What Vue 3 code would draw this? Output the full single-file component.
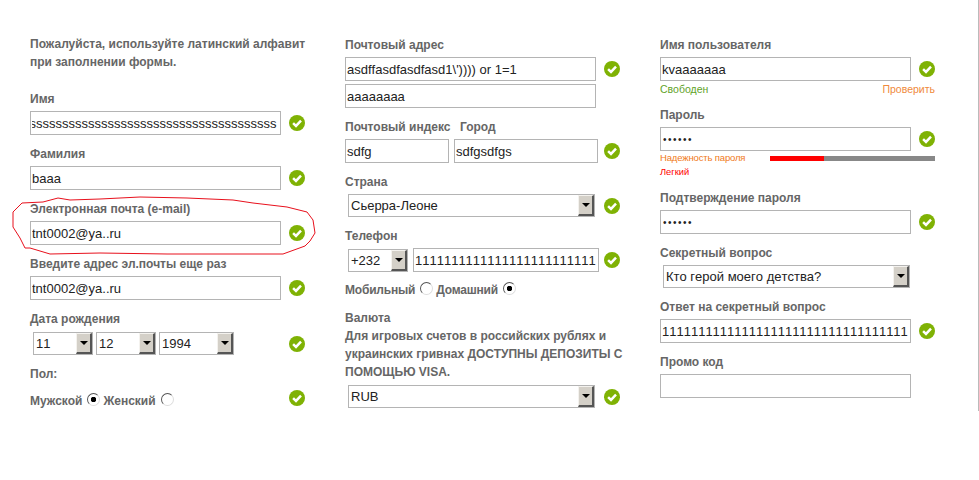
<script setup>
import { onMounted, ref } from 'vue'

const nameInput = ref(null)

onMounted(() => {
  if (nameInput.value) nameInput.value.scrollLeft = nameInput.value.scrollWidth
})
</script>

<template>
  <form class="page" @submit.prevent>
    <svg class="defs" width="0" height="0" aria-hidden="true">
      <symbol id="ok" viewBox="0 0 16 16">
        <circle cx="8" cy="8" r="8" fill="#7fb204" />
        <path d="M4.1 8.1 L7 10.9 L12 5.6" fill="none" stroke="#fff" stroke-width="2.5" />
      </symbol>
    </svg>

    <section class="col">
      <p class="intro">Пожалуйста, используйте латинский алфавит<br />при заполнении формы.</p>

      <div class="field">
        <label>Имя</label>
        <div class="row">
          <input ref="nameInput" class="in scrolled" readonly value="sssssssssssssssssssssssssssssssssssssssssssssssss" />
          <svg class="ok"><use href="#ok" /></svg>
        </div>
      </div>
      <div class="field">
        <label>Фамилия</label>
        <div class="row">
          <input class="in" readonly value="baaa" />
          <svg class="ok"><use href="#ok" /></svg>
        </div>
      </div>
      <div class="field">
        <label>Электронная почта (e-mail)</label>
        <div class="row">
          <input class="in" readonly value="tnt0002@ya..ru" />
          <svg class="ok"><use href="#ok" /></svg>
        </div>
      </div>
      <div class="field">
        <label>Введите адрес эл.почты еще раз</label>
        <div class="row">
          <input class="in" readonly value="tnt0002@ya..ru" />
          <svg class="ok"><use href="#ok" /></svg>
        </div>
      </div>
      <div class="field date">
        <label>Дата рождения</label>
        <div class="row">
          <div class="selects">
            <div class="sel w60"><span>11</span><i class="arrow"></i></div>
            <div class="sel w60"><span>12</span><i class="arrow"></i></div>
            <div class="sel w75"><span>1994</span><i class="arrow"></i></div>
          </div>
          <svg class="ok"><use href="#ok" /></svg>
        </div>
      </div>
      <div class="field gender">
        <label>Пол:</label>
        <div class="row">
          <div class="radios">
            <span class="opt">Мужской</span><i class="radio on"></i>
            <span class="opt">Женский</span><i class="radio"></i>
          </div>
          <svg class="ok up"><use href="#ok" /></svg>
        </div>
      </div>
    </section>

    <section class="col">
      <div class="field">
        <label>Почтовый адрес</label>
        <div class="row">
          <input class="in" readonly value="asdffasdfasdfasd1\')))) or 1=1" />
          <svg class="ok"><use href="#ok" /></svg>
        </div>
        <input class="in second" readonly value="aaaaaaaa" />
      </div>
      <div class="field">
        <div class="pair-labels">
          <label class="zip-label">Почтовый индекс</label>
          <label>Город</label>
        </div>
        <div class="row">
          <input class="in zip" readonly value="sdfg" />
          <input class="in city" readonly value="sdfgsdfgs" />
          <svg class="ok"><use href="#ok" /></svg>
        </div>
      </div>
      <div class="field">
        <label>Страна</label>
        <div class="row">
          <div class="sel wide"><span>Сьерра-Леоне</span><i class="arrow"></i></div>
          <svg class="ok"><use href="#ok" /></svg>
        </div>
      </div>
      <div class="field phone">
        <label>Телефон</label>
        <div class="row">
          <div class="sel code"><span>+232</span><i class="arrow"></i></div>
          <input class="in num" readonly value="1111111111111111111111111" />
          <svg class="ok"><use href="#ok" /></svg>
        </div>
        <div class="radios phone-type">
          <span class="opt">Мобильный</span><i class="radio"></i>
          <span class="opt">Домашний</span><i class="radio on"></i>
        </div>
      </div>
      <div class="field currency">
        <label>Валюта</label>
        <p class="note">Для игровых счетов в российских рублях и<br />украинских гривнах ДОСТУПНЫ ДЕПОЗИТЫ С<br />ПОМОЩЬЮ VISA.</p>
        <div class="row">
          <div class="sel wide"><span>RUB</span><i class="arrow"></i></div>
          <svg class="ok"><use href="#ok" /></svg>
        </div>
      </div>
    </section>

    <section class="col">
      <div class="field user">
        <label>Имя пользователя</label>
        <div class="row">
          <input class="in" readonly value="kvaaaaaaa" />
          <svg class="ok"><use href="#ok" /></svg>
        </div>
        <div class="hint">
          <span class="free">Свободен</span>
          <a class="check-link">Проверить</a>
        </div>
      </div>
      <div class="field pass">
        <label>Пароль</label>
        <div class="row">
          <input class="in dots" type="password" readonly value="123456" />
          <svg class="ok"><use href="#ok" /></svg>
        </div>
        <div class="strength">
          <span class="strength-label">Надежность пароля</span>
          <div class="bar"><div class="bar-fill"></div></div>
        </div>
        <div class="weak">Легкий</div>
      </div>
      <div class="field">
        <label>Подтверждение пароля</label>
        <div class="row">
          <input class="in dots" type="password" readonly value="123456" />
          <svg class="ok"><use href="#ok" /></svg>
        </div>
      </div>
      <div class="field">
        <label>Секретный вопрос</label>
        <div class="row">
          <div class="sel wide"><span>Кто герой моего детства?</span><i class="arrow"></i></div>
        </div>
      </div>
      <div class="field">
        <label>Ответ на секретный вопрос</label>
        <div class="row">
          <input class="in" readonly value="1111111111111111111111111111111111" />
          <svg class="ok"><use href="#ok" /></svg>
        </div>
      </div>
      <div class="field">
        <label>Промо код</label>
        <div class="row">
          <input class="in" readonly value="" />
        </div>
      </div>
    </section>

    <svg class="scribble" width="330" height="70" viewBox="0 190 330 70" aria-hidden="true">
      <path
        d="M25 248 L20 238 L13 227 L13 212 L22 203 L43 202 L58 198 L70 200 L100 199 L140 197 L187 198 L233 200 L253 203 L287 207 L307 212 L313 220 L315 233 L310 241 L305 246 L283 254 L233 254 L167 254 L100 253 L50 254 L30 248 L25 248"
        fill="none" stroke="#e8101c" stroke-width="1" />
    </svg>
  </form>
</template>

<style>
html, body { margin: 0; background: #fff; }
</style>

<style scoped>
.page {
  position: relative;
  box-sizing: border-box;
  width: 979px;
  height: 411px;
  border-right: 1px solid #bbb;
  display: flex;
  font: bold 12px/18px "Liberation Sans", Arial, sans-serif;
  color: #666;
}
.defs { position: absolute; }
.col {
  width: 315px;
  box-sizing: border-box;
  padding: 36px 0 0 30px;
}
p { margin: 0; }
.intro { margin: -1px 0 19px; }
label { display: block; height: 18px; }

.field { width: 275px; margin-bottom: 10px; }
.field > label, .pair-labels { margin-bottom: 3px; }
.row {
  display: flex;
  align-items: center;
}
.row > .ok { margin-left: auto; }

.in {
  box-sizing: border-box;
  width: 251px;
  height: 24px;
  padding: 0 1px;
  border: 1px solid #b4b4b4;
  outline: none;
  background: #fff;
  color: #222;
  font: 13px "Liberation Sans", Arial, sans-serif;
  font-kerning: none;
}
.scrolled { padding-right: 3px; }
.second { display: block; margin-top: 3px; }
.dots { font-size: 10px; letter-spacing: 1.5px; padding-left: 2px; }
.pair-labels { display: flex; }
.zip-label { width: 115px; }
.zip { width: 104px; }
.city { width: 144px; margin-left: 5px; }
.num { width: 186px; margin-left: 5px; }

.sel {
  box-sizing: border-box;
  height: 23px;
  display: flex;
  align-items: center;
  justify-content: space-between;
  border: 1px solid #b4b4b4;
  background: #fff;
  color: #222;
  font: 13px "Liberation Sans", Arial, sans-serif;
  font-kerning: none;
  padding-left: 2px;
}
.w60 { width: 60px; }
.w75 { width: 75px; }
.wide { width: 247px; margin-left: 3px; }
.code { width: 60px; margin-left: 3px; flex: none; }
.arrow {
  box-sizing: border-box;
  position: relative;
  width: 16px;
  height: 21px;
  flex: none;
  background: #d4d0c8;
  border-style: solid;
  border-width: 1px 2px 2px 1px;
  border-color: #f4f2ee #555 #555 #f4f2ee;
}
.arrow::after {
  content: "";
  position: absolute;
  left: 3px;
  top: 7px;
  border-style: solid;
  border-width: 4px 4px 0;
  border-color: #000 transparent transparent;
}
.selects { display: flex; gap: 3px; padding-left: 3px; }

.ok { width: 16px; height: 16px; flex: none; }
.ok.up { margin-top: -6px; }

.date > label { margin-bottom: 4px; }
.date { margin-top: 9px; }
.gender > label { margin-bottom: 9px; }

.radios { display: flex; align-items: center; }
.opt { line-height: 18px; }
.radio {
  box-sizing: border-box;
  display: block;
  width: 13px;
  height: 13px;
  margin: -3px 3px 0 5px;
  border-radius: 50%;
  border: 1px solid;
  border-color: #555 #ddd #ddd #555;
  background: #fff;
}
.radio.on { background: radial-gradient(circle, #000 0 2.5px, #fff 3px); }
.phone-type { margin-top: 9px; letter-spacing: -0.2px; }
.phone { margin-bottom: 10px; }
.phone > label { margin-bottom: 3px; }
.currency > label { margin-bottom: 0; }
.note { white-space: nowrap; margin-bottom: 4px; }

.user, .pass { margin-bottom: 0; }
.hint {
  display: flex;
  justify-content: space-between;
  font: 10.5px/16px "Liberation Sans", Arial, sans-serif;
  margin-bottom: 9px;
}
.free { color: #5fa32a; }
.check-link { color: #f08a3c; }
.strength {
  display: flex;
  justify-content: space-between;
  align-items: center;
  height: 14px;
  font: 9.5px/14px "Liberation Sans", Arial, sans-serif;
  letter-spacing: -0.15px;
}
.strength-label { color: #f07a20; }
.bar { width: 165px; height: 5px; background: #888; }
.bar-fill { width: 54px; height: 5px; background: #f00; }
.weak {
  font: 9.3px/14px "Liberation Sans", Arial, sans-serif;
  color: #f00;
  margin-bottom: 10px;
}

.scribble { position: absolute; left: 0; top: 190px; pointer-events: none; }
</style>
